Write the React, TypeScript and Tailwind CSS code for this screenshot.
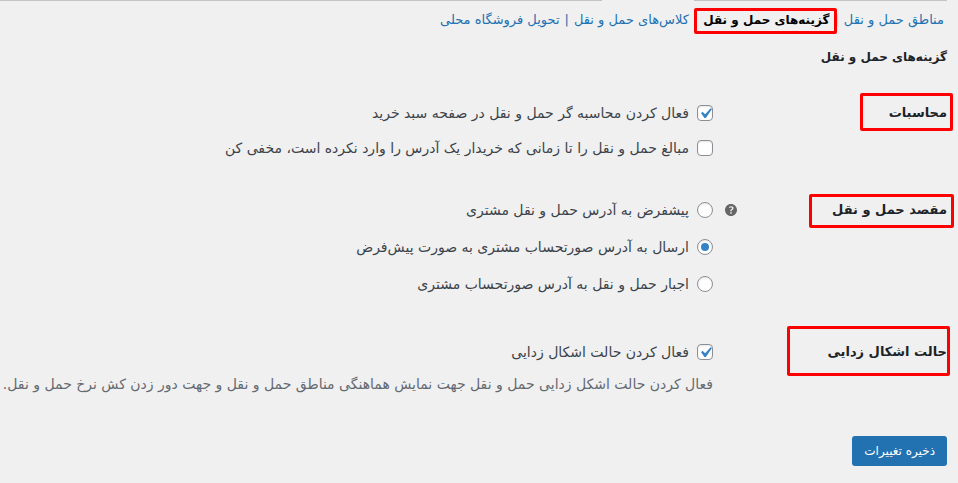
import type { ReactNode } from "react";

function Callout({ className }: { className: string }) {
  return (
    <span
      aria-hidden="true"
      className={`pointer-events-none absolute rounded-xs border-3 border-[#ff0000] ${className}`}
    />
  );
}

function Check({ label, checked = false }: { label: string; checked?: boolean }) {
  return (
    <label className="flex h-6 items-center gap-2">
      <span className="relative size-4 shrink-0">
        <input
          type="checkbox"
          defaultChecked={checked}
          className="peer block size-4 appearance-none rounded-sm border border-[#8c8f94] bg-white shadow-[inset_0_1px_2px_rgba(0,0,0,0.1)]"
        />
        <svg
          viewBox="0 0 20 20"
          className="pointer-events-none absolute -top-[2px] -left-[2px] hidden size-[21px] max-w-none peer-checked:block"
        >
          <path
            d="M14.83 4.89l1.34.94-5.81 8.38H9.02L5.78 9.67l1.34-1.25 2.57 2.4z"
            fill="#3582c4"
          />
        </svg>
      </span>
      <span>{label}</span>
    </label>
  );
}

function Radio({ label, checked = false }: { label: string; checked?: boolean }) {
  return (
    <label className="flex h-6 items-center gap-2">
      <input
        type="radio"
        name="ship_to"
        defaultChecked={checked}
        className="flex size-4 shrink-0 appearance-none items-center justify-center rounded-full border border-[#8c8f94] bg-white shadow-[inset_0_1px_2px_rgba(0,0,0,0.1)] before:size-2 before:rounded-full checked:before:bg-[#3582c4] checked:before:content-['']"
      />
      <span>{label}</span>
    </label>
  );
}

function Row({
  title,
  box,
  help = false,
  children,
}: {
  title: string;
  box: string;
  help?: boolean;
  children: ReactNode;
}) {
  return (
    <section className="flex">
      <div className="relative flex h-6 w-[234px] shrink-0 items-center justify-between">
        <h3 className="text-[13px] font-bold text-[#1d2327]">{title}</h3>
        {help && (
          <button type="button" aria-label="راهنما" className="ml-3">
            <svg viewBox="3 3 14 14" className="size-3">
              <path
                fill="#666"
                d="M17 10c0-3.87-3.14-7-7-7-3.87 0-7 3.13-7 7s3.13 7 7 7c3.86 0 7-3.13 7-7zm-6.3 1.48H9.14v-.43c0-.38.08-.7.24-.98s.46-.57.88-.89c.41-.29.68-.53.81-.71.14-.18.2-.39.2-.62 0-.25-.09-.44-.28-.58-.19-.13-.45-.19-.79-.19-.58 0-1.25.19-2 .57l-.64-1.28c.87-.49 1.8-.74 2.77-.74.81 0 1.45.2 1.92.58.48.39.71.91.71 1.55 0 .43-.09.8-.29 1.11-.19.32-.57.67-1.11 1.06-.38.28-.61.49-.71.63-.1.15-.15.34-.15.57v.35zm-1.47 2.74c-.18-.17-.27-.42-.27-.73 0-.33.08-.58.26-.75s.43-.25.77-.25c.32 0 .57.09.75.26s.27.42.27.74c0 .3-.09.55-.27.72-.18.18-.43.27-.75.27-.33 0-.58-.09-.76-.26z"
              />
            </svg>
          </button>
        )}
        <Callout className={box} />
      </div>
      <div className="min-w-0 flex-1">{children}</div>
    </section>
  );
}

export default function App() {
  return (
    <main
      dir="rtl"
      lang="fa"
      className="min-h-screen overflow-x-hidden bg-[#f0f0f0] pr-[11px] pb-4 font-['DejaVu_Sans',sans-serif] text-sm text-[#3c434a]"
    >
      <div className="flex h-px justify-between">
        <div className="w-[253px] bg-[#c3c4c7]" />
        <div className="mr-[92px] flex-1 bg-[#c3c4c7]" />
      </div>

      <nav className="mt-[7px] flex h-6 items-center gap-[5px] pr-[3px] text-[13px] text-[#2271b1]">
        <a href="#zones">مناطق حمل و نقل</a>
        <span className="text-[#a7aaad]">|</span>
        <span className="relative text-xs">
          <a href="#options" className="font-bold text-black">گزینه‌های حمل و نقل</a>
          <Callout className="-top-1 -right-2 -bottom-[6px] -left-[9px]" />
        </span>
        <span className="text-[#a7aaad]">|</span>
        <a href="#classes">کلاس‌های حمل و نقل</a>
        <span>|</span>
        <a href="#pickup">تحویل فروشگاه محلی</a>
      </nav>

      <h2 className="mt-[13px] h-6 text-xs leading-6 font-bold text-[#1d2327]">گزینه‌های حمل و نقل</h2>

      <form className="mt-8" onSubmit={(e) => e.preventDefault()}>
        <Row title="محاسبات" box="-right-[6px] -top-2 h-[38px] w-[93px]">
          <div className="flex flex-col gap-[11px]">
            <Check checked label="فعال کردن محاسبه گر حمل و نقل در صفحه سبد خرید" />
            <Check label="مبالغ حمل و نقل را تا زمانی که خریدار یک آدرس را وارد نکرده است، مخفی کن" />
          </div>
        </Row>
        <div className="mt-[38px]">
          <Row title="مقصد حمل و نقل" box="-right-[7px] -top-1 h-[34px] w-[145px]" help>
            <div className="flex flex-col gap-[13px]">
              <Radio label="پیشفرض به آدرس حمل و نقل مشتری" />
              <Radio checked label="ارسال به آدرس صورتحساب مشتری به صورت پیش‌فرض" />
              <Radio label="اجبار حمل و نقل به آدرس صورتحساب مشتری" />
            </div>
          </Row>
        </div>
        <div className="mt-11">
          <Row title="حالت اشکال زدایی" box="-right-[3px] -top-[14px] h-[50px] w-[163px]">
            <Check checked label="فعال کردن حالت اشکال زدایی" />
            <p className="mt-2 leading-6 whitespace-nowrap text-[#646970]">
              فعال کردن حالت اشکل زدایی حمل و نقل جهت نمایش هماهنگی مناطق حمل و نقل و جهت دور زدن کش نرخ حمل و نقل.
            </p>
          </Row>
        </div>
        <button
          type="submit"
          className="mt-10 h-[30px] rounded-[3px] bg-[#2271b1] px-3 text-xs text-white"
        >
          ذخیره تغییرات
        </button>
      </form>
    </main>
  );
}
